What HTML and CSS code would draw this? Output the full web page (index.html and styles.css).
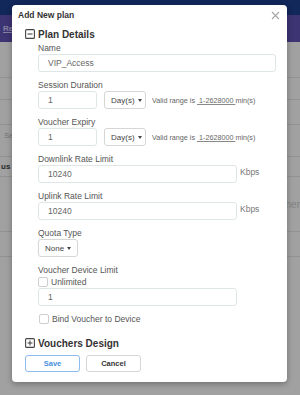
FILE: index.html
```html
<!DOCTYPE html>
<html>
  <head>
    <title>Add New plan</title>
    <link rel="stylesheet" href="styles.css">
  </head>
  <body>
    <div class="page">
      <div class="topbar"></div>
      <div class="navbar"><a class="nav-link">Re</a></div>
      <div class="table">
        <div class="row r1"></div>
        <div class="row r2"></div>
        <div class="row r3"></div>
        <div class="row r4"><span class="cell-muted">Sel</span></div>
        <div class="row r5"><span class="cell-bold">us</span></div>
        <div class="row r6"><span class="cell-right">her</span></div>
        <div class="row r7"></div>
      </div>
    </div>

    <div class="backdrop"></div>

    <div class="modal">
      <div class="modal-header">
        <span class="modal-title">Add New plan</span>
        <span class="close">
          <svg width="9" height="9" viewBox="0 0 9 9"><path d="M1 1L8 8M8 1L1 8" stroke="#a5a5a5" stroke-width="1.1" fill="none"/></svg>
        </span>
      </div>

      <div class="section-head">
        <span class="toggle">
          <svg width="10" height="10" viewBox="0 0 10 10"><rect x="0.6" y="0.6" width="8.8" height="8.8" rx="1" fill="none" stroke="#444" stroke-width="1.1"/><path d="M2.5 5H7.5" stroke="#444" stroke-width="1.1"/></svg>
        </span>
        Plan Details
      </div>

      <div class="fields">
        <div class="field">
          <label>Name</label>
          <input class="input input-full" type="text" value="VIP_Access">
        </div>
        <div class="field">
          <label>Session Duration</label>
          <div class="inline">
            <input class="input input-short" type="text" value="1">
            <span class="dropdown dropdown-day">Day(s) <i class="caret"></i></span>
            <span class="hint">Valid range is <u>&nbsp;1-2628000&nbsp;</u>min(s)</span>
          </div>
        </div>
        <div class="field">
          <label>Voucher Expiry</label>
          <div class="inline">
            <input class="input input-short" type="text" value="1">
            <span class="dropdown dropdown-day">Day(s) <i class="caret"></i></span>
            <span class="hint">Valid range is <u>&nbsp;1-2628000&nbsp;</u>min(s)</span>
          </div>
        </div>
        <div class="field">
          <label>Downlink Rate Limit</label>
          <div class="inline">
            <input class="input input-wide" type="text" value="10240">
            <span class="unit">Kbps</span>
          </div>
        </div>
        <div class="field">
          <label>Uplink Rate Limit</label>
          <div class="inline">
            <input class="input input-wide" type="text" value="10240">
            <span class="unit">Kbps</span>
          </div>
        </div>
        <div class="field">
          <label>Quota Type</label>
          <div class="inline">
            <span class="dropdown">None <i class="caret"></i></span>
          </div>
        </div>
        <div class="field">
          <label>Voucher Device Limit</label>
          <div class="check-row"><span class="checkbox"></span>Unlimited</div>
          <input class="input input-wide" type="text" value="1">
        </div>
        <div class="field">
          <div class="check-row bind"><span class="checkbox"></span>Bind Voucher to Device</div>
        </div>
      </div>

      <div class="section-head section-bottom">
        <span class="toggle">
          <svg width="10" height="10" viewBox="0 0 10 10"><rect x="0.6" y="0.6" width="8.8" height="8.8" rx="1" fill="none" stroke="#444" stroke-width="1.1"/><path d="M2.5 5H7.5M5 2.5V7.5" stroke="#444" stroke-width="1.1"/></svg>
        </span>
        Vouchers Design
      </div>

      <div class="actions">
        <button class="btn btn-save">Save</button>
        <button class="btn btn-cancel">Cancel</button>
      </div>
    </div>
  </body>
</html>
```

FILE: styles.css
```css
body {
  margin: 0;
  font-family: "Liberation Sans", Arial, sans-serif;
  background-color: #fff;
  width: 300px;
  height: 395px;
  overflow: hidden;
  position: relative;
}

.topbar {
  height: 15px;
  background-color: #1e3f8f;
}

.navbar {
  height: 27px;
  background-color: #6153b7;
  display: flex;
  align-items: center;
  padding-left: 3px;
}

.nav-link {
  color: #d6ccff;
  font-size: 8px;
  font-weight: bold;
  text-decoration: underline;
}

.row {
  border-bottom: 1px solid #e8e8e8;
  display: flex;
  align-items: center;
  font-size: 8px;
}

.r1 { height: 35px; }
.r2 { height: 21px; }
.r3 { height: 24px; }
.r4 { height: 31px; }
.r5 { height: 19px; }
.r6 { height: 54px; justify-content: flex-end; }
.r7 { height: 24px; }

.cell-muted {
  color: #b8b8b8;
  padding-left: 4px;
  margin-top: -10px;
}

.cell-bold {
  color: #444;
  font-weight: bold;
  padding-left: 1px;
}

.cell-right {
  color: #d0d0d0;
  font-size: 10px;
}

.backdrop {
  position: absolute;
  top: 0;
  left: 0;
  right: 0;
  bottom: 0;
  background-color: rgba(0, 0, 0, 0.37);
}

.modal {
  position: absolute;
  left: 12px;
  top: 5px;
  width: 275px;
  box-sizing: border-box;
  background-color: #fff;
  border-radius: 4px;
  box-shadow: 0 2px 6px rgba(0, 0, 0, 0.3);
  padding-bottom: 10px;
}

.modal-header {
  height: 20px;
  display: flex;
  align-items: center;
  justify-content: space-between;
  padding: 0 6px;
}

.modal-title {
  font-size: 8.5px;
  font-weight: bold;
  color: #333;
}

.close {
  display: flex;
  margin-right: 1px;
}

.section-head {
  height: 16px;
  margin-top: 1px;
  padding-left: 13px;
  display: flex;
  align-items: center;
  font-size: 10px;
  font-weight: bold;
  color: #333;
}

.toggle {
  display: flex;
  margin-right: 3px;
}

.section-bottom {
  margin-top: 10px;
}

.fields {
  padding: 0 11px 0 26px;
}

.field {
  margin-bottom: 7px;
}

.field label {
  display: block;
  font-size: 8.5px;
  line-height: 12px;
  color: #555;
}

.input {
  box-sizing: border-box;
  height: 18px;
  border: 1px solid #dfe6e8;
  border-radius: 3px;
  padding: 0 9px;
  font-family: "Liberation Sans", Arial, sans-serif;
  font-size: 8.5px;
  color: #666;
  outline: none;
  display: block;
}

.input-full {
  width: 100%;
}

.input-short {
  width: 59px;
}

.input-wide {
  width: 199px;
}

.inline {
  display: flex;
  align-items: center;
}

.dropdown {
  box-sizing: border-box;
  height: 18px;
  border: 1px solid #d6d6d6;
  border-radius: 3px;
  padding: 0 6px;
  display: inline-flex;
  align-items: center;
  font-size: 8px;
  color: #444;
}

.dropdown-day {
  margin-left: 7px;
  width: 42px;
}

.caret {
  display: inline-block;
  width: 0;
  height: 0;
  margin-left: 3px;
  border-left: 2.5px solid transparent;
  border-right: 2.5px solid transparent;
  border-top: 3px solid #444;
}

.hint {
  margin-left: 6px;
  font-size: 7.2px;
  color: #666;
}

.hint u {
  text-decoration-color: #888;
}

.unit {
  align-self: flex-start;
  margin-left: 3px;
  margin-top: 2px;
  font-size: 8.5px;
  color: #777;
}

.check-row {
  height: 12px;
  display: flex;
  align-items: center;
  font-size: 8.5px;
  color: #555;
}

.checkbox {
  box-sizing: border-box;
  width: 10px;
  height: 10px;
  border: 1px solid #cfcfcf;
  border-radius: 2px;
  margin-right: 3px;
}

.bind {
  padding-left: 1px;
}

.actions {
  display: flex;
  gap: 6px;
  padding-left: 13px;
  margin-top: 4px;
}

.btn {
  box-sizing: border-box;
  width: 55px;
  height: 17px;
  border-radius: 3px;
  background-color: #fff;
  font-family: "Liberation Sans", Arial, sans-serif;
  font-size: 7.5px;
  font-weight: bold;
  padding: 0;
  cursor: pointer;
}

.btn-save {
  border: 1px solid #8dbbed;
  color: #4a8fe0;
}

.btn-cancel {
  border: 1px solid #d6d6d6;
  color: #333;
}
```
